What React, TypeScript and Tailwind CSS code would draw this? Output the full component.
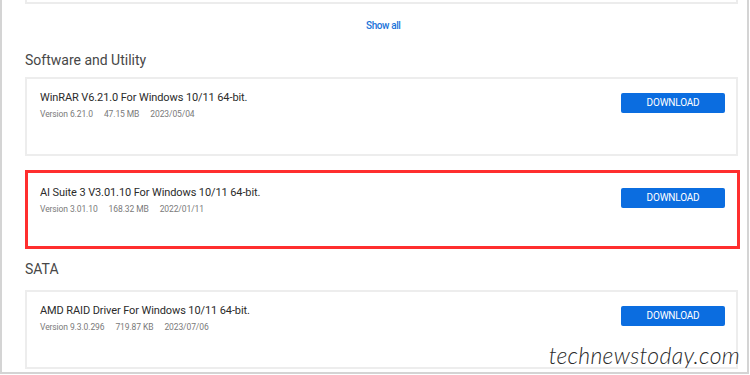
import React from "react";

function Row({ title, meta, red }: { title: string; meta: string[]; red?: boolean }) {
  return (
    <div
      className={
        red
          ? "flex h-[79px] w-[715px] items-start justify-between border-[3px] border-[#ff2e2e] pl-[12px] pr-[12px] pt-[13px]"
          : "flex h-[79px] items-start justify-between border-2 border-[#ededed] pl-[13px] pr-[11px] pt-[12px]"
      }
    >
      <div className="flex flex-col">
        <div className="text-[11px] leading-[14px] text-[#2b2b2b] tracking-[-0.1px]">{title}</div>
        <div className="mt-[3px] flex gap-[11px] text-[8.5px] leading-[12px] text-[#7a7a7a] tracking-[-0.1px]">
          {meta.map((m) => (
            <span key={m}>{m}</span>
          ))}
        </div>
      </div>
      <button className="mt-[2px] flex h-[20px] w-[104px] items-center justify-center rounded-[2px] bg-[#0b6de0] text-[10px] leading-none text-white tracking-[-0.2px]">
        DOWNLOAD
      </button>
    </div>
  );
}

export default function App() {
  return (
    <div className="relative h-[375px] w-[750px] overflow-hidden bg-white font-['Roboto',sans-serif]">
      <div className="h-[374px] w-[749px] border-x-2 border-b-2 border-[#d4d4d4] pl-[23px] pr-[9px]">
        <div className="h-[4px] border-x-2 border-b-2 border-[#ececec]" />
        <div className="flex h-[42px] items-center pl-[341px]">
          <span className="text-[10px] font-medium text-[#1a73d9] tracking-[-0.4px]">Show all</span>
        </div>
        <div className="h-[31px] pt-[6px] text-[14px] leading-[17px] text-[#474747]">
          Software and Utility
        </div>
        <Row title="WinRAR V6.21.0 For Windows 10/11 64-bit." meta={["Version 6.21.0", "47.15 MB", "2023/05/04"]} />
        <div className="h-[14px]" />
        <Row red title="AI Suite 3 V3.01.10 For Windows 10/11 64-bit." meta={["Version 3.01.10", "168.32 MB", "2022/01/11"]} />
        <div className="flex h-[41px] items-center text-[14px] leading-[17px] text-[#474747]">SATA</div>
        <div className="h-[90px]">
          <Row title="AMD RAID Driver For Windows 10/11 64-bit." meta={["Version 9.3.0.296", "719.87 KB", "2023/07/06"]} />
        </div>
      </div>
      <div className="absolute right-[10px] top-[340px] font-['Lato',sans-serif] text-[23px] font-light italic leading-[30px] text-[#2a2a2a] tracking-[0.3px]">
        technewstoday.com
      </div>
    </div>
  );
}
